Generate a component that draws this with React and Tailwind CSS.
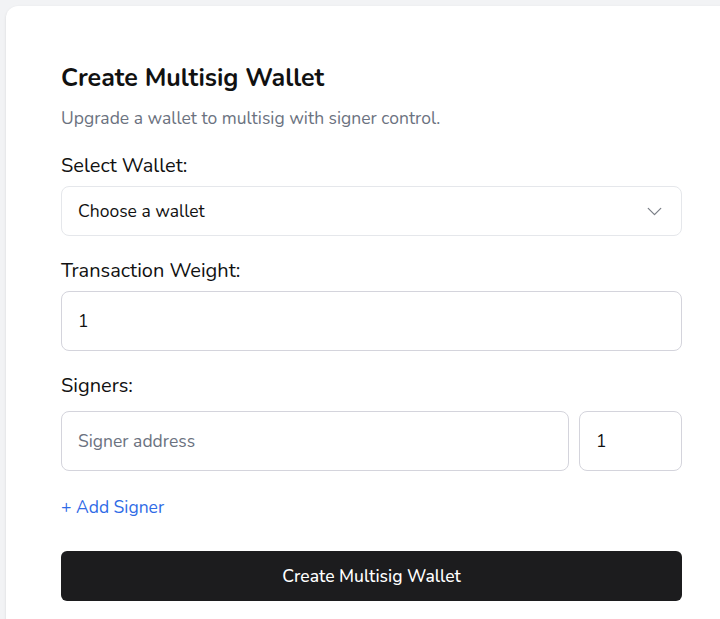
import React from 'react';
import { ChevronDown } from 'lucide-react';

const App = () => {
  return (
    <div className="h-[619px] w-full overflow-hidden bg-[#f2f3f5] pl-[6px] pt-[6px] font-['Nunito','Noto_Sans',sans-serif] text-[#111]">
      <div className="w-[731px] rounded-xl bg-white px-[55px] pt-[56px] pb-10 shadow-sm">
        <h2 className="text-[25px] font-bold leading-8">Create Multisig Wallet</h2>
        <p className="mt-[12px] text-[17.5px] leading-6 text-[#6b7280]">
          Upgrade a wallet to multisig with signer control.
        </p>

        <label className="mt-[22px] block text-[20px] leading-7">Select Wallet:</label>
        <div className="mt-[6px] flex h-[50px] items-center justify-between rounded-lg border border-[#e5e7eb] pl-4 pr-[14px]">
          <span className="text-[17.5px]">Choose a wallet</span>
          <ChevronDown size={25} strokeWidth={1.2} className="text-[#7b7f87]" />
        </div>

        <label className="mt-[21px] block text-[20px] leading-7">Transaction Weight:</label>
        <div className="mt-[6px] flex h-[60px] items-center rounded-lg border border-[#d4d4dc] px-4">
          <span className="text-[17.5px]">1</span>
        </div>

        <label className="mt-[21px] block text-[20px] leading-7">Signers:</label>
        <div className="mt-[11px] flex gap-[10px]">
          <div className="flex h-[60px] flex-1 items-center rounded-lg border border-[#d4d4dc] px-4">
            <span className="text-[17.5px] text-[#6b7280]">Signer address</span>
          </div>
          <div className="flex h-[60px] w-[103px] items-center rounded-lg border border-[#d4d4dc] px-4">
            <span className="text-[17.5px]">1</span>
          </div>
        </div>

        <button className="mt-[24px] block text-[17.5px] leading-6 text-[#2f6be6]">+ Add Signer</button>

        <button className="mt-[32px] flex h-[50px] w-full items-center justify-center rounded-md bg-[#1c1c1e] text-[17.5px] font-medium text-white">
          Create Multisig Wallet
        </button>
      </div>
    </div>
  );
};

export default App;
